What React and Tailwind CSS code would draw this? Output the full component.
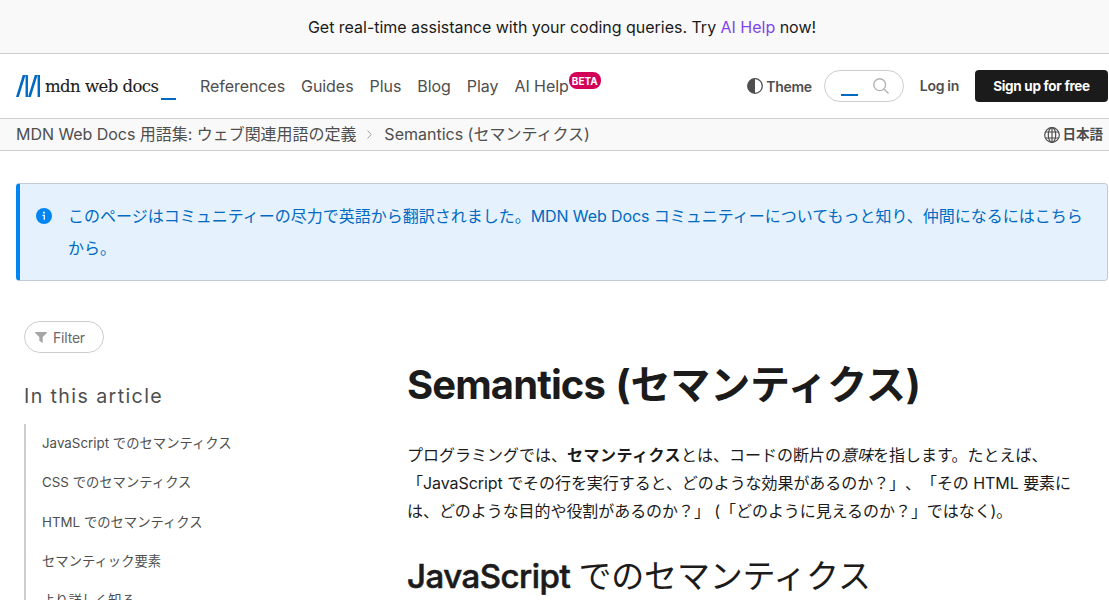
import React from "react";

const navItems = ["References", "Guides", "Plus", "Blog", "Play"];

const tocItems = [
  "JavaScript でのセマンティクス",
  "CSS でのセマンティクス",
  "HTML でのセマンティクス",
  "セマンティック要素",
  "より詳しく知る",
];

function Logo() {
  return (
    <a className="flex h-8 w-[160px] shrink-0 items-center" aria-label="MDN Web Docs">
      <svg className="h-[22px] w-6 shrink-0" viewBox="0 0 101.2 92.1" fill="#0069c2">
        <path d="M40.3 0 11.7 92.1H0L28.5 0zM50.4 0v92.1H40.3V0zM91 0 62.5 92.1H50.8L79.4 0zM101.2 0v92.1H91V0z" />
      </svg>
      <span className="mt-px ml-[5px] w-[115px] whitespace-nowrap font-['DejaVu_Serif',serif] text-[16.5px] leading-8 tracking-[-0.55px] text-[#1b1b1b] [-webkit-text-stroke:0.1px_#1b1b1b]">
        mdn web docs
      </span>
      <span className="mt-[25px] ml-px h-[2px] w-[15px] shrink-0 bg-[#0069c2]" />
    </a>
  );
}

function Header() {
  return (
    <header className="flex h-[65px] items-center border-b border-[#cdcdcd] bg-white pl-4">
      <Logo />
      <nav className="ml-6 flex items-center gap-4 text-[16px] tracking-[-0.06px] text-[#4e4e4e]">
        {navItems.map((item) => (
          <a key={item}>{item}</a>
        ))}
        <a className="relative">
          AI Help
          <sup className="absolute -top-[2px] left-full flex h-[17px] w-8 items-center justify-center rounded-lg bg-[#d30058] text-[10px] font-bold text-white">
            BETA
          </sup>
        </a>
      </nav>
      <div className="ml-auto flex items-center pr-px text-[14px] font-semibold tracking-[-0.3px] text-[#4e4e4e]">
        <button className="flex items-center gap-[3px]">
          <svg className="size-4" viewBox="0 0 16 16">
            <circle cx="8" cy="8" r="7.3" fill="none" stroke="#4e4e4e" strokeWidth="1.3" />
            <path d="M8 .7a7.3 7.3 0 0 0 0 14.6z" fill="#4e4e4e" />
          </svg>
          Theme
        </button>
        <div className="ml-3 flex h-8 w-20 items-center rounded-full border border-[#cdcdcd] pl-4">
          <span className="mt-[17px] h-[2px] w-[17px] bg-[#0069c2]" />
          <svg className="ml-[15px] size-4" viewBox="0 0 16 16" fill="none" stroke="#b3b3b3" strokeWidth="1.4">
            <circle cx="6.7" cy="6.7" r="5.9" />
            <path d="m11 11 4.5 4.5" />
          </svg>
        </div>
        <a className="mb-[2px] ml-4">Log in</a>
        <a className="ml-4 flex h-8 w-[133px] items-center justify-center rounded bg-[#1b1b1b] text-[13.5px] font-bold text-white">
          Sign up for free
        </a>
      </div>
    </header>
  );
}

function Breadcrumbs() {
  return (
    <div className="flex h-8 items-center border-b border-[#cdcdcd] bg-[#f9f9f9] pr-[6px] pb-px pl-4 text-[16px] text-[#4e4e4e]">
      <span className="whitespace-nowrap tracking-[-0.04px]">MDN Web Docs 用語集: ウェブ関連用語の定義</span>
      <svg className="mr-3 ml-[11px] h-[9px] w-[5px]" viewBox="0 0 5 9" fill="none" stroke="#9e9e9e">
        <path d="m.5.5 3.7 4-3.7 4" />
      </svg>
      <span className="whitespace-nowrap">Semantics (セマンティクス)</span>
      <button className="ml-auto flex items-center gap-[3px] text-[13.5px] font-semibold">
        <svg className="mt-px size-4" viewBox="0 0 16 16" fill="none" stroke="#4e4e4e" strokeWidth="1.2">
          <circle cx="8" cy="8" r="7.3" />
          <ellipse cx="8" cy="8" rx="3.7" ry="7.3" />
          <path d="M8 .7v14.6M1.5 5h13M1.5 11h13" />
        </svg>
        日本語
      </button>
    </div>
  );
}

function Notice() {
  return (
    <div className="mt-8 mr-px ml-4 flex h-[98px] rounded border border-l-4 border-[#c2ccd6] border-l-[#0085f2] bg-[#e5f2fd] pt-4 pl-4">
      <svg className="mt-2 size-4 shrink-0" viewBox="0 0 16 16">
        <circle cx="8" cy="8" r="8" fill="#0085f2" />
        <path d="M7 3.8h2v1.6H7zM6.4 6.8H9v5H7.6V8H6.4z" fill="#e5f2fd" />
      </svg>
      <p className="ml-4 text-[16px] leading-8 text-[#0069c2]">
        <span className="whitespace-nowrap">
          このページはコミュニティーの尽力で英語から翻訳されました。
          <span className="tracking-[-0.11px]">MDN Web Docs </span>
          コミュニティーについてもっと知り、仲間になるにはこちら
        </span>
        <br />
        から。
      </p>
    </div>
  );
}

function Sidebar() {
  return (
    <aside className="w-[383px] shrink-0 pt-10 pl-6">
      <div className="flex h-8 w-20 items-center rounded-full border border-[#cdcdcd] pl-[10px] text-[14px] tracking-[-0.2px] text-[#696969]">
        <svg className="mr-[6px] h-[11px] w-3" viewBox="0 0 12 11">
          <path d="M.5 0h11a.5.5 0 0 1 .3.9L7.7 5v6L4.3 8.8V5L.2.9A.5.5 0 0 1 .5 0z" fill="#a5a5a5" />
        </svg>
        Filter
      </div>
      <h2 className="mt-[27px] text-[19.6px] leading-8 tracking-[1.4px] text-[#4e4e4e]">In this article</h2>
      <ul className="mt-3 border-l-2 border-[#cdcdcd] text-[13.3px] tracking-[0.03px] text-[#4e4e4e]">
        {tocItems.map((item) => (
          <li key={item} className="flex h-[39.4px] items-center pl-4 whitespace-nowrap">
            {item}
          </li>
        ))}
      </ul>
    </aside>
  );
}

function Article() {
  return (
    <main className="pl-6 text-[#1b1b1b]">
      <h1 className="mt-[76px] text-[40px] leading-[56px] font-bold tracking-[-0.15px] whitespace-nowrap">
        <span className="tracking-[-0.9px]">Semantics </span>
        <span className="ml-0.5">(セマンティクス)</span>
      </h1>
      <p className="mt-7 text-[16px] leading-7 whitespace-nowrap [text-spacing-trim:space-all]">
        プログラミングでは、<strong className="font-bold tracking-[0.5px]">セマンティクス</strong>とは、コードの断片の<em>意味</em>を指します。たとえば、
        <br />
        <span className="tracking-[-0.06px]">「JavaScript でその行を実行すると、どのような効果があるのか？」、「その HTML 要素に</span>
        <br />
        <span className="tracking-[-0.06px]">は、どのような目的や役割があるのか？」 (「どのように見えるのか？」ではなく)。</span>
      </p>
      <h2 className="mt-7 text-[33px] leading-[46px] tracking-[-0.2px] whitespace-nowrap">
        <span className="font-medium tracking-[-0.5px] [-webkit-text-stroke:0.6px_#1b1b1b]">JavaScript </span>
        <span className="font-normal">でのセマンティクス</span>
      </h2>
    </main>
  );
}

export default function App() {
  return (
    <div
      lang="ja"
      className="h-[600px] w-full overflow-hidden bg-white font-['Inter','Noto_Sans_CJK_JP',sans-serif]"
    >
      <div className="flex h-[54px] items-center justify-center border-b border-[#cdcdcd] bg-[#f9f9f9] text-[16px] tracking-[-0.02px] text-[#1b1b1b]">
        <p className="ml-[15px]">
          Get real-time assistance with your coding queries. Try <a className="text-[#8045ec]">AI Help</a> now!
        </p>
      </div>
      <Header />
      <Breadcrumbs />
      <Notice />
      <div className="flex">
        <Sidebar />
        <Article />
      </div>
    </div>
  );
}
